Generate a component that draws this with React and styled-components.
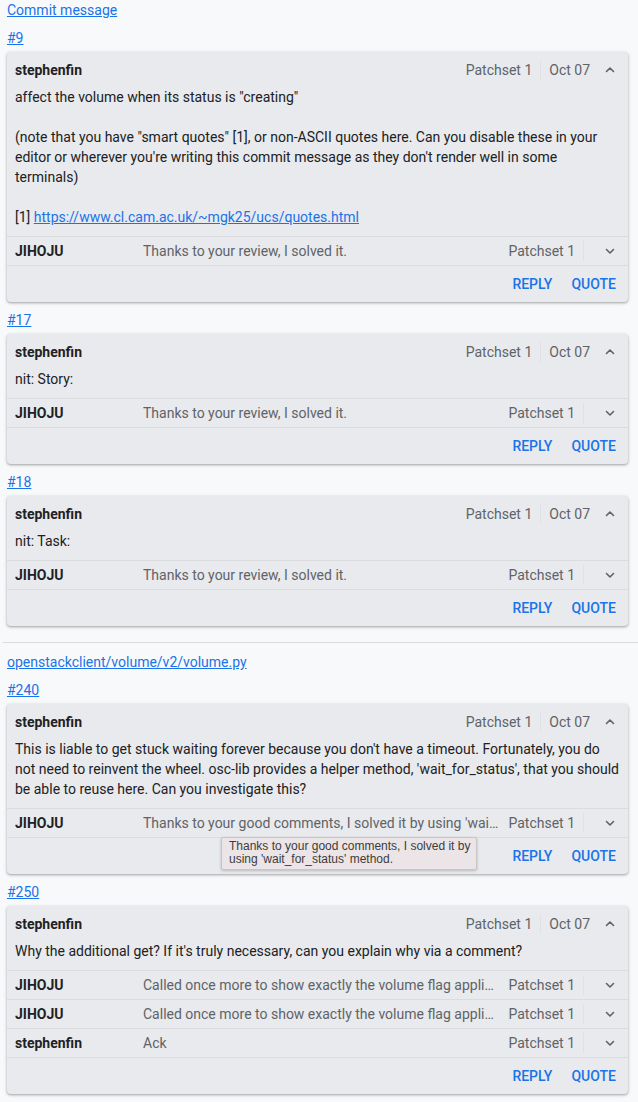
import React from "react";
import styled, { createGlobalStyle } from "styled-components";

const Global = createGlobalStyle`
  html, body { margin: 0; padding: 0; background: #f8f9fa; }
  body { font-family: Roboto, "Noto Sans", sans-serif; font-size: 14px; color: #202124; }
  * { box-sizing: border-box; }
`;

const Page = styled.div`
  padding: 0 10px 8px 7px;
`;

const Group = styled.section`
  display: flex;
  flex-direction: column;
  ${(p) => p.$sep && `
    border-top: 1px solid #dadce0;
    margin: 16px -10px 0 -4px;
    padding: 9px 10px 0 4px;
  `}
`;

const Link = styled.a`
  color: #1a73e8;
  text-decoration: underline;
  line-height: 20px;
  font-size: 14px;
  cursor: pointer;
`;

const LinkLine = styled.div`
  line-height: 20px;
  margin-top: ${(p) => p.$top || 0}px;
  margin-bottom: ${(p) => p.$bottom || 0}px;
`;

const Card = styled.div`
  background: #e8eaed;
  border-radius: 4px;
  box-shadow: 0 1px 2px rgba(60,64,67,.3), 0 1px 3px 1px rgba(60,64,67,.15);
`;

const Header = styled.div`
  display: flex;
  align-items: center;
  height: 35px;
  padding: 0 6px 0 8px;
`;

const Name = styled.div`
  font-weight: 700;
  color: #202124;
  width: ${(p) => (p.$w ? p.$w + "px" : "auto")};
  flex: ${(p) => (p.$w ? "none" : "1")};
`;

const Meta = styled.div`
  color: #5f6368;
  padding: 0 8px;
  line-height: 20px;
  ${(p) => p.$divider && `border-right: 1px solid #dfe1e4;`}
`;

const IconBox = styled.div`
  width: ${(p) => p.$w || 24}px;
  height: 24px;
  display: flex;
  align-items: center;
  justify-content: ${(p) => p.$end ? "flex-end" : "center"};
  padding-right: ${(p) => p.$pr || 0}px;
  color: #5f6368;
`;

const Body = styled.div`
  padding: 0 8px 9px;
  line-height: 20px;
  white-space: pre-wrap;
  color: #202124;
`;

const ReplyRow = styled.div`
  position: relative;
  display: flex;
  align-items: center;
  height: 29px;
  border-top: 1px solid #dadce0;
  padding: 0 6px 0 8px;
`;

const ReplyMsg = styled.div`
  flex: 1;
  min-width: 0;
  color: #5f6368;
  white-space: nowrap;
  overflow: hidden;
  text-overflow: ellipsis;
`;

const Actions = styled.div`
  display: flex;
  justify-content: flex-end;
  align-items: center;
  gap: 19px;
  height: 37px;
  border-top: 1px solid #dadce0;
  padding: 0 12px 0 8px;
`;

const ActionBtn = styled.button`
  border: none;
  background: none;
  padding: 0;
  font-family: Roboto, sans-serif;
  font-size: 14px;
  font-weight: 500;
  color: #1a73e8;
  text-transform: uppercase;
  cursor: pointer;
`;

const Tooltip = styled.div`
  position: absolute;
  left: 214px;
  top: 100%;
  width: 256px;
  padding: 2px 2px 3px 7px;
  background: #ebe5e7;
  border: 1px solid #c9c4c6;
  border-radius: 2px;
  box-shadow: 0 1px 3px rgba(0,0,0,.2);
  font-family: "Liberation Sans", Arial, sans-serif;
  font-size: 12px;
  line-height: 13px;
  color: #3c3c3c;
  z-index: 2;
`;

const Chevron = ({ up }) => (
  <svg width="12" height="12" viewBox="0 0 12 12" fill="none" stroke="currentColor" strokeWidth="1.6" strokeLinecap="round" strokeLinejoin="round">
    {up ? <polyline points="2.5,7.5 6,4 9.5,7.5" /> : <polyline points="2.5,4.5 6,8 9.5,4.5" />}
  </svg>
);

const QUOTES_URL = "https://www.cl.cam.ac.uk/~mgk25/ucs/quotes.html";

const groups = [
  {
    file: "Commit message",
    threads: [
      {
        id: "#9",
        author: "stephenfin",
        body: (
          <>
            {'affect the volume when its status is "creating"\n\n(note that you have "smart quotes" [1], or non-ASCII quotes here. Can you disable these in your editor or wherever you\'re writing this commit message as they don\'t render well in some terminals)\n\n[1] '}
            <Link>{QUOTES_URL}</Link>
          </>
        ),
        replies: [{ author: "JIHOJU", msg: "Thanks to your review, I solved it." }],
      },
      {
        id: "#17",
        author: "stephenfin",
        body: "nit: Story:",
        replies: [{ author: "JIHOJU", msg: "Thanks to your review, I solved it." }],
      },
      {
        id: "#18",
        author: "stephenfin",
        body: "nit: Task:",
        replies: [{ author: "JIHOJU", msg: "Thanks to your review, I solved it." }],
      },
    ],
  },
  {
    file: "openstackclient/volume/v2/volume.py",
    threads: [
      {
        id: "#240",
        author: "stephenfin",
        body: "This is liable to get stuck waiting forever because you don't have a timeout. Fortunately, you do not need to reinvent the wheel. osc-lib provides a helper method, 'wait_for_status', that you should be able to reuse here. Can you investigate this?",
        replies: [
          {
            author: "JIHOJU",
            msg: "Thanks to your good comments, I solved it by using 'wait_for_status' method.",
            tooltip: true,
          },
        ],
      },
      {
        id: "#250",
        author: "stephenfin",
        body: "Why the additional get? If it's truly necessary, can you explain why via a comment?",
        replies: [
          { author: "JIHOJU", msg: "Called once more to show exactly the volume flag applied to the volume." },
          { author: "JIHOJU", msg: "Called once more to show exactly the volume flag applied to the volume." },
          { author: "stephenfin", msg: "Ack" },
        ],
      },
    ],
  },
];

const Thread = ({ t }) => (
  <>
    <LinkLine $top={8} $bottom={4}>
      <Link>{t.id}</Link>
    </LinkLine>
    <Card>
      <Header>
        <Name>{t.author}</Name>
        <Meta $divider>Patchset 1</Meta>
        <Meta>Oct 07</Meta>
        <IconBox $w={24}>
          <Chevron up />
        </IconBox>
      </Header>
      <Body>{t.body}</Body>
      {t.replies.map((r, i) => (
        <ReplyRow key={i}>
          <Name $w={128}>{r.author}</Name>
          <ReplyMsg>{r.msg}</ReplyMsg>
          <Meta $divider>Patchset 1</Meta>
          <IconBox $w={38} $end $pr={6}>
            <Chevron />
          </IconBox>
          {r.tooltip && <Tooltip>{r.msg}</Tooltip>}
        </ReplyRow>
      ))}
      <Actions>
        <ActionBtn>Reply</ActionBtn>
        <ActionBtn>Quote</ActionBtn>
      </Actions>
    </Card>
  </>
);

export default function App() {
  return (
    <Page>
      <Global />
      {groups.map((g, gi) => (
        <Group key={gi} $sep={gi > 0}>
          <LinkLine>
            <Link>{g.file}</Link>
          </LinkLine>
          {g.threads.map((t, ti) => (
            <Thread key={ti} t={t} />
          ))}
        </Group>
      ))}
    </Page>
  );
}
